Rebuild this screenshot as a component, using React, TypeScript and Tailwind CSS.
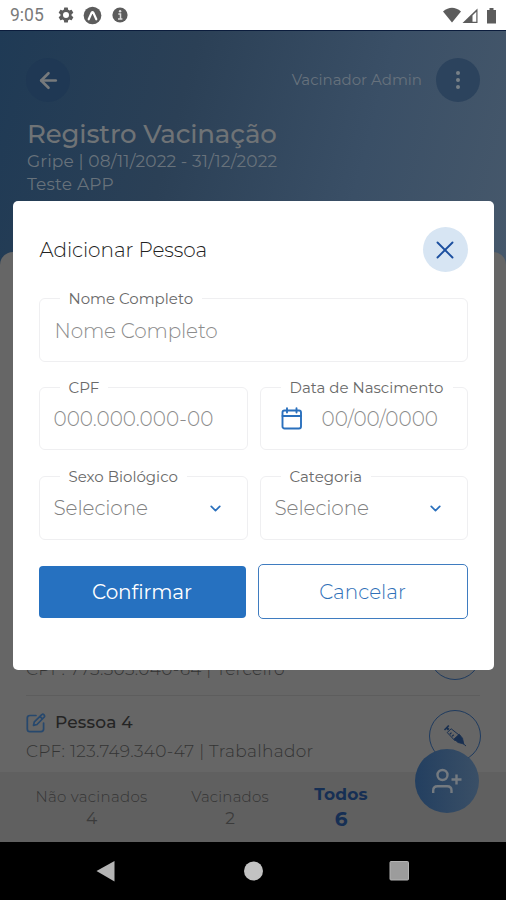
import React from 'react';
import { ArrowLeft, ChevronDown, X } from 'lucide-react';

const GearIcon = () => (
  <svg viewBox="0 0 24 24" className="w-[18px] h-[18px]" fill="#5c5c5c">
    <path
      fillRule="evenodd"
      d="M19.4 13c.04-.3.06-.65.06-1s-.02-.7-.07-1l2.1-1.6c.2-.15.25-.4.13-.63l-2-3.46a.5.5 0 0 0-.6-.22l-2.5 1a7.3 7.3 0 0 0-1.7-.98l-.38-2.65A.5.5 0 0 0 14 2h-4a.5.5 0 0 0-.48.42l-.38 2.65c-.6.25-1.17.58-1.69.98l-2.5-1a.5.5 0 0 0-.6.22l-2 3.46c-.12.22-.07.48.13.63L4.6 11c-.05.3-.07.66-.07 1s.02.7.07 1l-2.1 1.6c-.2.16-.25.42-.13.64l2 3.46c.12.22.38.3.6.22l2.5-1c.52.4 1.08.73 1.7.98l.37 2.65c.04.24.24.42.48.42h4c.24 0 .45-.18.48-.42l.38-2.65c.6-.25 1.17-.58 1.69-.98l2.5 1c.22.08.48 0 .6-.22l2-3.46a.5.5 0 0 0-.12-.63zM12 16a4 4 0 1 1 0-8 4 4 0 0 1 0 8z"
    />
  </svg>
);

const ExpoIcon = () => (
  <svg viewBox="0 0 20 20" className="w-[19px] h-[19px]">
    <circle cx="10" cy="10" r="9.3" fill="#5c5c5c" />
    <path d="M6 14 9.2 7q.8-1.2 1.6 0l3.2 7" fill="none" stroke="#fff" strokeWidth="2.3" strokeLinecap="round" />
    <path d="m8.4 13.6 1.6-3 1.6 3" fill="#5c5c5c" />
  </svg>
);

const InfoIcon = () => (
  <svg viewBox="0 0 16 16" className="w-[16px] h-[16px]">
    <circle cx="8" cy="8" r="7.6" fill="#5c5c5c" />
    <path d="M6.3 7h2.2v5M6 12h4.4" stroke="#ddd" strokeWidth="1.5" fill="none" />
    <circle cx="8.1" cy="4.3" r="1.2" fill="#ddd" />
  </svg>
);

const StatusBar = () => (
  <div className="h-[30px] shrink-0 bg-white flex items-center justify-between pl-[10px] pr-[8px]">
    <div className="flex items-center">
      <span className="w-[47px] font-[Roboto] text-[17.5px] leading-none text-[#7a7a7a] pt-0.5">9:05</span>
      <GearIcon />
      <span className="ml-2"><ExpoIcon /></span>
      <span className="ml-[10px]"><InfoIcon /></span>
    </div>
    <svg width="56" height="18" viewBox="0 0 56 18" className="mt-0.5">
      <path d="M1 4.5Q10 -3 19 4.5L10 15.5z" fill="#5c5c5c" />
      <path d="M20.5 16 35.5 1.5V16z" fill="#5c5c5c" />
      <path d="M30.5 8.5 34.3 4.8v10h-3.8z" fill="#fff" />
      <path d="M45 3h2.5V1h4v2H54v13.5h-9z" fill="#5c5c5c" />
    </svg>
  </div>
);

const Header = () => (
  <header className="h-[235px] shrink-0 border-t border-[#0b1c3c] bg-[linear-gradient(105deg,#1f3a55_0%,#2b4056_35%,#3a4f66_70%,#46586b_100%)] px-[26px] pt-[27px]">
    <div className="flex items-center justify-between">
      <div className="w-[44px] h-[44px] rounded-full bg-[#1f3854] flex items-center justify-center">
        <ArrowLeft className="w-[25px] h-[25px] text-[#777a7c]" strokeWidth={2.5} />
      </div>
      <div className="flex items-center gap-[14px]">
        <span className="text-[15px] text-[#67727d]">Vacinador Admin</span>
        <div className="w-[44px] h-[44px] rounded-full bg-[#2c435d] flex flex-col gap-[3px] items-center justify-center">
          <i className="w-1 h-1 rounded-full bg-[#788087]" />
          <i className="w-1 h-1 rounded-full bg-[#788087]" />
          <i className="w-1 h-1 rounded-full bg-[#788087]" />
        </div>
      </div>
    </div>
    <h1 className="mt-[16px] ml-px text-[26px] leading-[32px] font-medium tracking-[-0.15px] text-[#6f7376] whitespace-nowrap">Registro Vacinação</h1>
    <p className="ml-px text-[17px] leading-[23px] tracking-[0.15px] text-[#68727b] whitespace-nowrap">Gripe | 08/11/2022 - 31/12/2022</p>
    <p className="ml-px text-[17px] leading-[23px] tracking-[0.2px] text-[#68727b]">Teste APP</p>
  </header>
);

const EditIcon = () => (
  <svg viewBox="0 0 20 20" className="w-[20px] h-[20px]" fill="none" stroke="#27486d" strokeWidth="1.7" strokeLinejoin="round" strokeLinecap="round">
    <path d="M10 2.5H4Q1.3 2.5 1.3 5v11Q1.3 18.7 4 18.7h11q2.6 0 2.6-2.6v-6" />
    <path d="m7.5 12.4.8-3.5 7.5-7.3q1.2-.8 2.2.2t.3 2.2l-7.3 7.5zM14 3.5l2.4 2.4" />
  </svg>
);

const SyringeIcon = () => (
  <svg viewBox="0 0 24 24" className="w-[24px] h-[24px]" stroke="#182f50" fill="none">
    <path d="M1.5 6 5.8 1.5" strokeWidth="1.6" />
    <path d="m3.7 3.8 2 2" strokeWidth="2.2" />
    <path d="M4.2 8.5 8.2 4.8l8.8 7-5 5z" strokeWidth="1" />
    <path d="m11 15 5.2-4.8 3.3 4 1.3 5.8-5.8-1.5z" fill="#182f50" strokeWidth="0.8" />
    <path d="m6.8 10.2 1.7-1.6M9 12.400l1.700-1.600" strokeWidth="1.200" />
    <path d="m20 19.500 3 2.500" strokeWidth="1" />
  </svg>
);

interface PersonRowProps {
  name: string;
  details: string;
}

const PersonRow: React.FC<PersonRowProps> = ({ name, details }) => (
  <div className="h-[82px] shrink-0 mx-[26px] flex justify-between border-b border-[#5d5d5d]">
    <div className="pt-[14px]">
      <div className="flex items-center gap-[9px] h-[26px]">
        <EditIcon />
        <span className="text-[17px] tracking-[0.2px] font-medium text-[#242424]">{name}</span>
      </div>
      <p className="mt-[2px] text-[17px] leading-[26px] font-light tracking-[0.3px] text-[#343434] whitespace-nowrap">{details}</p>
    </div>
    <div className="mt-[14px] -mr-px w-[52px] h-[52px] rounded-full border-[1.5px] border-[#1f3b5f] flex items-center justify-center">
      <SyringeIcon />
    </div>
  </div>
);

const SummaryTabs = () => (
  <div className="h-[70px] shrink-0 bg-[#606060] flex text-center text-[#3b3b3b] relative pl-[26px]">
    <div className="w-[131px] pt-[15px]">
      <p className="text-[15px] leading-5 font-light tracking-[0.3px] text-[#343434]">Não vacinados</p>
      <p className="text-[17px] leading-[22px]">4</p>
    </div>
    <div className="w-[146px] pt-[15px]">
      <p className="text-[15px] leading-5 font-light tracking-[0.2px] text-[#343434]">Vacinados</p>
      <p className="text-[17px] leading-[22px]">2</p>
    </div>
    <div className="w-[76px] pt-[11px] font-bold text-[#162f54]">
      <p className="text-[17px] leading-[23px] tracking-[0.2px]">Todos</p>
      <p className="text-[20px] leading-[27px]">6</p>
    </div>
    <div className="absolute left-[415px] -top-[23px] w-[64px] h-[64px] rounded-full bg-linear-to-r from-[#233f60] to-[#3a4f66] flex items-center justify-center">
      <svg viewBox="0 0 30 26" className="w-[30px] h-[26px]" fill="none" stroke="#747a80" strokeWidth="2.4">
        <circle cx="10.5" cy="7" r="5" />
        <path d="M1.2 25v-2.5q0-4.3 4.3-4.3h9.7q4.3 0 4.3 4.3V25M24.5 6.5v10M19.5 11.5h10" />
      </svg>
    </div>
  </div>
);

const NavBar = () => (
  <div className="h-[58px] shrink-0 bg-black flex items-center justify-center">
    <svg width="313" height="22" viewBox="0 0 313 22" className="ml-[-1px]">
      <path d="M0.5 11 18.5 1v20.5z" fill="#b4b4b4" />
      <circle cx="157.5" cy="11" r="9.5" fill="#c2c2c2" />
      <rect x="294" y="1.5" width="18.5" height="18.5" rx="1" fill="#9c9c9c" stroke="#b4b4b4" />
    </svg>
  </div>
);

interface FieldProps {
  label: string;
  className?: string;
  children: React.ReactNode;
}

const Field: React.FC<FieldProps> = ({ label, className = '', children }) => (
  <fieldset className={`min-w-0 border-[1.5px] border-[#efeff1] rounded-[6px] ${className}`}>
    <legend className="ml-[20px] px-[9px] text-[15px] leading-[17px] text-[#6a6a6a] whitespace-nowrap">{label}</legend>
    {children}
  </fieldset>
);

const Select = ({ label }: { label: string }) => (
  <Field label={label} className="h-[72px]">
    <div className="h-[46px] pl-[14px] pr-[23px] flex items-center justify-between">
      <span className="text-[20px] font-light tracking-[-0.1px] text-[#808080]">Selecione</span>
      <ChevronDown className="w-[17px] h-[17px] text-[#2a70bd]" strokeWidth={2.4} />
    </div>
  </Field>
);

const AddPersonModal = () => (
  <div className="w-[481px] h-[469px] bg-white rounded-[5px] px-[26px] pt-[26px]">
    <div className="flex items-center justify-between">
      <h2 className="ml-px pt-px text-[20px] font-light tracking-[-0.05px] text-[#222]">Adicionar Pessoa</h2>
      <div className="w-[45px] h-[45px] rounded-full bg-[#d7e5f3] flex items-center justify-center">
        <X className="w-[30px] h-[30px] text-[#1c4f9f]" strokeWidth={1.5} />
      </div>
    </div>

    <Field label="Nome Completo" className="mt-[18px] h-[72px]">
      <div className="h-[48px] pl-[15px] flex items-center text-[20px] font-light tracking-[-0.15px] text-[#8c8c8c]">Nome Completo</div>
    </Field>

    <div className="mt-[17px] grid grid-cols-[209px_208px] gap-[12px]">
      <Field label="CPF" className="h-[71px]">
        <div className="h-[46px] pl-[14px] flex items-center text-[20px] font-light text-[#8c8c8c] whitespace-nowrap">000.000.000-00</div>
      </Field>
      <Field label="Data de Nascimento" className="h-[71px]">
        <div className="h-[46px] pl-[20px] flex items-center text-[20px] font-light text-[#8c8c8c] whitespace-nowrap">
          <svg viewBox="0 0 22 23" className="w-[22px] h-[23px] mr-[19px] -mt-px" fill="none" stroke="#2a70bd" strokeWidth="1.9" strokeLinecap="round">
            <rect x="1.5" y="3.5" width="18.5" height="18" rx="2" />
            <path d="M1.5 9h18.5M6 1.2v4.3M15.5 1.2v4.3" />
          </svg>
          00/00/0000
        </div>
      </Field>
    </div>

    <div className="mt-[18px] grid grid-cols-[209px_208px] gap-[12px]">
      <Select label="Sexo Biológico" />
      <Select label="Categoria" />
    </div>

    <div className="mt-[24px] flex items-center justify-between">
      <button className="w-[207px] h-[52px] rounded-[4px] bg-[#2671c0] text-white text-[20px] tracking-[-0.1px]">Confirmar</button>
      <button className="w-[210px] h-[55px] rounded-[5px] border-[1.5px] border-[#3f7cc0] text-[#2f70b8] text-[20px] font-light">Cancelar</button>
    </div>
  </div>
);

export default function App() {
  return (
    <div className="relative w-[506px] h-[900px] overflow-hidden flex flex-col bg-black font-[Montserrat,Inter,sans-serif]">
      <StatusBar />
      <div className="h-[812px] flex flex-col">
        <Header />
        <main className="-mt-[13px] flex-1 min-h-0 bg-[#666] rounded-t-[13px] flex flex-col justify-end">
          <PersonRow name="Pessoa 3" details="CPF: 773.505.040-64 | Terceiro" />
          <div className="h-[76px] overflow-hidden flex flex-col shrink-0">
            <PersonRow name="Pessoa 4" details="CPF: 123.749.340-47 | Trabalhador" />
          </div>
        </main>
        <SummaryTabs />
      </div>
      <NavBar />
      <div className="absolute inset-x-0 top-[201px] flex justify-center">
        <AddPersonModal />
      </div>
    </div>
  );
}
